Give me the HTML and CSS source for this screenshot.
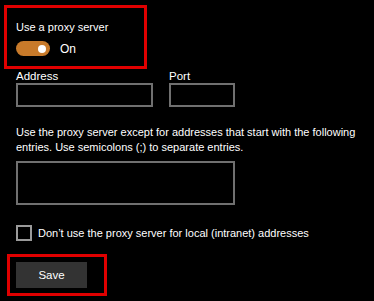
FILE: index.html
```html
<!DOCTYPE html>
<html lang="en">
<head>
<meta charset="UTF-8">
<title>Proxy settings</title>
<link rel="stylesheet" href="styles.css">
</head>
<body>
<div class="settings">
  <div class="group toggle-group">
    <div class="label">Use a proxy server</div>
    <div class="toggle-row">
      <span class="toggle"><span class="knob"></span></span>
      <span class="toggle-text">On</span>
    </div>
    <div class="mark mark-toggle"></div>
  </div>

  <div class="fields">
    <div class="field">
      <div class="label">Address</div>
      <div class="input address"></div>
    </div>
    <div class="field">
      <div class="label">Port</div>
      <div class="input port"></div>
    </div>
  </div>

  <p class="note">Use the proxy server except for addresses that start with the following entries. Use semicolons (;) to separate entries.</p>
  <div class="input exceptions"></div>

  <div class="check-row">
    <span class="checkbox"></span>
    <span>Don’t use the proxy server for local (intranet) addresses</span>
  </div>

  <div class="group save-group">
    <button class="save-button">Save</button>
    <div class="mark mark-save"></div>
  </div>
</div>
</body>
</html>
```

FILE: styles.css
```css
html, body {
  height: 100%;
}
body {
  margin: 0;
  background-color: #000;
  color: #fff;
  font-family: "Liberation Sans", Arial, sans-serif;
  font-size: 11px;
  overflow: hidden;
}
.settings {
  padding: 19px 0 0 16px;
}
.group {
  position: relative;
}
.label {
  line-height: 16px;
}
.toggle-row {
  display: flex;
  align-items: center;
  margin-top: 6px;
  height: 15px;
}
.toggle {
  width: 34px;
  height: 15px;
  border-radius: 8px;
  background-color: #c87a2a;
  position: relative;
}
.knob {
  position: absolute;
  width: 8px;
  height: 8px;
  border-radius: 50%;
  background-color: #fff;
  right: 4px;
  top: 3.5px;
}
.toggle-text {
  margin-left: 10px;
  font-size: 12px;
}
.mark {
  position: absolute;
  border: 3px solid #e00000;
}
.mark-toggle {
  left: -12px;
  top: -14px;
  width: 137px;
  height: 58px;
}
.fields {
  display: flex;
  gap: 16px;
  margin-top: 14px;
}
.field .label {
  line-height: 13px;
  font-size: 11.5px;
}
.input {
  border: 2px solid #707070;
  box-sizing: border-box;
  height: 24px;
}
.address {
  width: 137px;
}
.port {
  width: 66px;
}
.note {
  margin: 18px 0 0;
  line-height: 15px;
  width: 345px;
}
.exceptions {
  width: 219px;
  height: 44px;
  margin-top: 6px;
}
.check-row {
  display: flex;
  align-items: center;
  gap: 6px;
  margin-top: 20px;
}
.checkbox {
  width: 16px;
  height: 16px;
  border: 2px solid #9a9a9a;
  box-sizing: border-box;
}
.save-group {
  margin-top: 21px;
}
.save-button {
  display: block;
  width: 71px;
  height: 26px;
  border: none;
  background-color: #333;
  color: #fff;
  font-family: "Liberation Sans", Arial, sans-serif;
  font-size: 11.5px;
  padding: 0;
}
.mark-save {
  left: -9px;
  top: -8px;
  width: 94px;
  height: 36px;
}
```
